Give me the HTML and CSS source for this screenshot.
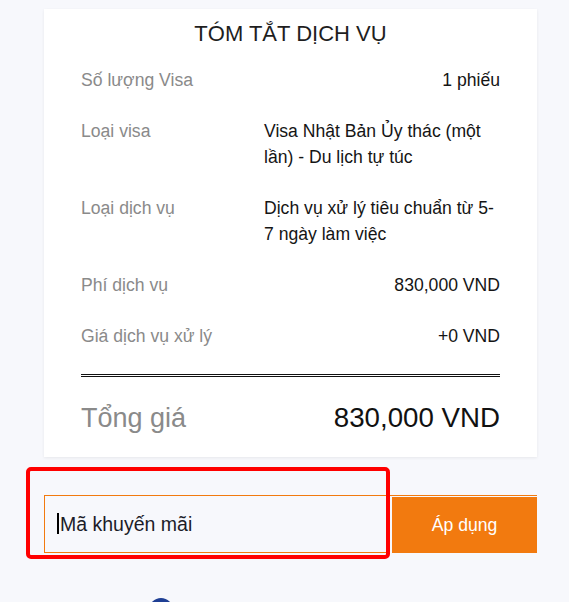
FILE: index.html
```html
<!DOCTYPE html>
<html lang="vi">
<head>
    <meta charset="UTF-8">
    <meta name="viewport" content="width=device-width, initial-scale=1.0">
    <title>Tóm tắt dịch vụ</title>
    <link rel="stylesheet" href="styles.css">
</head>
<body>
    <div class="container">
        <div class="summary">
            <h2 class="summary-title">TÓM TẮT DỊCH VỤ</h2>

            <div class="row">
                <span class="label">Số lượng Visa</span>
                <span class="value">1 phiếu</span>
            </div>
            <div class="row">
                <span class="label">Loại visa</span>
                <span class="value">Visa Nhật Bản Ủy thác (một lần) - Du lịch tự túc</span>
            </div>
            <div class="row">
                <span class="label">Loại dịch vụ</span>
                <span class="value">Dịch vụ xử lý tiêu chuẩn từ 5-7 ngày làm việc</span>
            </div>
            <div class="row">
                <span class="label">Phí dịch vụ</span>
                <span class="value">830,000 VND</span>
            </div>
            <div class="row">
                <span class="label">Giá dịch vụ xử lý</span>
                <span class="value">+0 VND</span>
            </div>

            <div class="total">
                <span class="total-label">Tổng giá</span>
                <span class="total-value">830,000 VND</span>
            </div>
        </div>

        <div class="promo-wrap">
            <div class="promo">
                <div class="promo-field">
                    <span class="caret"></span>
                    <input class="promo-input" type="text" placeholder="Mã khuyến mãi">
                </div>
                <button class="promo-btn">Áp dụng</button>
            </div>
            <div class="highlight"></div>
        </div>

        <div class="next">
            <span class="dot"></span>
        </div>
    </div>
</body>
</html>
```

FILE: styles.css
```css
body {
    margin: 0;
    background-color: #f7f8fc;
    font-family: "Liberation Sans", Arial, sans-serif;
    color: #1a1a1a;
}

.container {
    width: 493px;
    padding-left: 44px;
    padding-top: 9px;
}

.summary {
    background-color: #fff;
    padding: 12px 37px 23px;
    box-shadow: 0 1px 3px rgba(0, 0, 0, 0.07);
}

.summary-title {
    margin: 0 0 21px;
    font-size: 22px;
    font-weight: normal;
    line-height: 25px;
    text-align: center;
    color: #1e1e1e;
}

.row {
    display: flex;
    justify-content: space-between;
    font-size: 17.6px;
    line-height: 26px;
    margin-bottom: 25px;
}

.label {
    color: #8a8a8a;
}

.value {
    max-width: 236px;
    color: #151515;
}

.total {
    display: flex;
    justify-content: space-between;
    border-top: 3px double #111;
    padding-top: 25px;
    font-size: 27px;
    line-height: 32px;
}

.total-label {
    color: #8a8a8a;
}

.total-value {
    font-size: 27.7px;
    color: #111;
}

.promo-wrap {
    position: relative;
    margin-top: 38px;
}

.promo {
    display: flex;
    gap: 2px;
    border-top: 1px solid #f27a0f;
}

.promo-field {
    position: relative;
    width: 346px;
}

.promo-input {
    box-sizing: border-box;
    width: 100%;
    height: 57px;
    margin: 0;
    padding: 0 0 0 15px;
    border: 1px solid #f27a0f;
    border-top: 0;
    background: transparent;
    font-family: "Liberation Sans", Arial, sans-serif;
    font-size: 19.5px;
    outline: none;
}

.promo-input::placeholder {
    color: #1c1c28;
    opacity: 1;
}

.caret {
    position: absolute;
    left: 13px;
    top: 17px;
    width: 2px;
    height: 21px;
    background: #000;
}

.promo-btn {
    flex: 1;
    height: 56px;
    margin-top: 1px;
    border: 0;
    background-color: #f27a0f;
    color: #fff;
    font-family: "Liberation Sans", Arial, sans-serif;
    font-size: 17.6px;
    cursor: pointer;
}

.highlight {
    position: absolute;
    left: -18px;
    top: -28px;
    width: 364px;
    height: 92px;
    box-sizing: border-box;
    border: 4px solid #ff0000;
    border-radius: 5px;
    pointer-events: none;
}

.next {
    padding-top: 45px;
    padding-left: 105px;
}

.dot {
    display: block;
    width: 24px;
    height: 24px;
    border-radius: 50%;
    background-color: #1e3f94;
}
```
